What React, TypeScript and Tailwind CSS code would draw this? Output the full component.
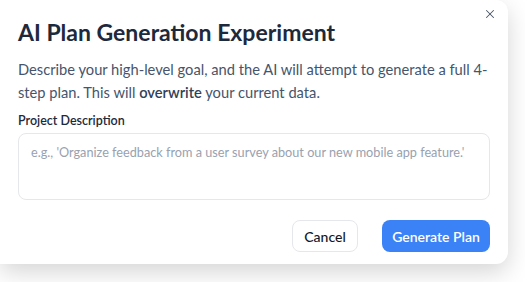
import { X } from 'lucide-react';

export default function App() {
  return (
    <div className="w-[525px] h-[282px] overflow-hidden bg-white font-['Lato',sans-serif]">
      {/* Dialog */}
      <div className="relative w-[508px] h-[264px] bg-white rounded-r-xl shadow-[0_8px_24px_rgba(0,0,0,0.17)] pl-[18px] pr-[18px] pt-[16px]">
        <button className="absolute top-[7px] right-[11px] text-gray-600">
          <X className="w-[14px] h-[14px]" strokeWidth={1.75} />
        </button>

        <h2 className="text-[23px] leading-[32px] font-bold text-slate-800">AI Plan Generation Experiment</h2>

        <p className="mt-[10px] text-[14.7px] leading-[23px] text-slate-600">
          <span className="whitespace-nowrap">Describe your high-level goal, and the AI will attempt to generate a full 4-</span>
          <br />
          step plan. This will <span className="font-semibold text-slate-700">overwrite</span> your current data.
        </p>

        <label className="block mt-[7px] text-[12.5px] leading-[20px] font-semibold text-slate-800">Project Description</label>
        <textarea
          className="mt-[2px] block w-full h-[67px] resize-none rounded-lg border border-gray-200 px-[12px] py-[8px] text-[12.7px] leading-[20px] text-slate-700 placeholder:text-gray-400 outline-none"
          placeholder="e.g., 'Organize feedback from a user survey about our new mobile app feature.'"
        />

        <div className="mt-[20px] flex justify-end gap-[24px]">
          <button className="h-[32px] w-[66px] rounded-lg border border-gray-200 bg-white text-[14px] font-medium text-gray-900">
            Cancel
          </button>
          <button className="h-[32px] w-[108px] rounded-lg bg-[#3b82f6] text-[14px] font-semibold text-white">
            Generate Plan
          </button>
        </div>
      </div>
    </div>
  );
}
